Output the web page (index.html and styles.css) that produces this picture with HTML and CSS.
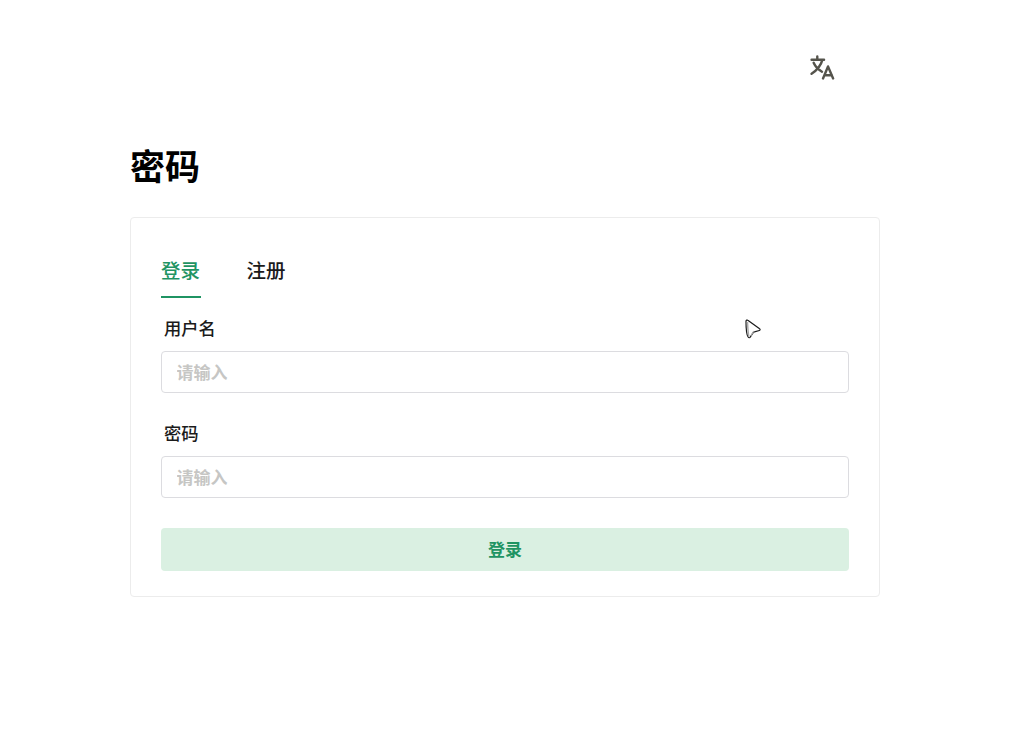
FILE: index.html
```html
<!DOCTYPE html>
<html lang="zh-CN">
<head>
<meta charset="utf-8">
<title>密码</title>
<link rel="stylesheet" href="styles.css">
</head>
<body>
<main class="page">
  <div class="topbar">
    <button class="lang" type="button" aria-label="语言">
      <svg width="25" height="25" viewBox="0 0 24 24" fill="none" stroke="#55544c" stroke-width="2.300" stroke-linecap="round" stroke-linejoin="round">
        <path d="M1.500 4.500h12M7 1.500v3M12 4.500C10.500 10 7 14.500 1.500 18M3.500 7.500c1.500 3.500 4.500 6.500 8 8.500"/>
        <path d="M12.500 22.500l4.800-11.500 4.900 11.500M14 19.500h7"/>
      </svg>
    </button>
  </div>
  <h1 class="title">密码</h1>
  <section class="card">
    <div class="tabs">
      <div class="tab tab-active">登录</div>
      <div class="tab">注册</div>
    </div>
    <form class="form">
      <div class="field">
        <label class="label" for="user">用户名</label>
        <input class="input" id="user" type="text" placeholder="请输入">
      </div>
      <div class="field">
        <label class="label" for="pass">密码</label>
        <input class="input" id="pass" type="text" placeholder="请输入">
      </div>
      <button class="submit" type="button">登录</button>
    </form>
  </section>
</main>
<svg class="cursor" width="18" height="20" viewBox="0 0 18 20" fill="#fff" stroke="#1a1a1a" stroke-width="1.200" stroke-linejoin="round">
  <path d="M2 2.200c0-1 1-1.500 1.800-.9l11.800 8.400c.8.500.6 1.600-.2 1.800l-5 1.400c-.5.1-.9.400-1.200.8l-3 4.500c-.5.8-1.800.7-2.100-.3C2.200 15 2 8 2 2.200z"/>
  <path d="M3.500 3c.2 5 .5 10 1.300 14.500" fill="none" stroke="#aaa" stroke-width="1.500"/>
  <path d="M6.800 17l3-5" fill="none" stroke="#aaa"/>
</svg>
</body>
</html>
```
FILE: styles.css
```css
* { box-sizing: border-box; }
html, body { margin: 0; height: 100%; background: #fff; }
body {
  font-family: "Noto Sans CJK SC", "Liberation Sans", sans-serif;
  color: #1b1b1b;
  position: relative;
  overflow: hidden;
}
.page { width: 750px; margin-left: 130px; }
.topbar {
  height: 143px;
  display: flex;
  justify-content: flex-end;
  padding: 55px 45px 0 0;
}
.lang {
  width: 25px;
  height: 25px;
  padding: 0;
  border: 0;
  background: none;
}
.lang svg { display: block; }
.title {
  margin: 0 0 31px;
  height: 43px;
  font-size: 35px;
  line-height: 43px;
  font-weight: 700;
  color: #000;
}
.card {
  height: 380px;
  border: 1px solid #ececec;
  border-radius: 4px;
  padding: 30px;
}
.tabs { display: flex; gap: 45.500px; height: 50px; }
.tab {
  height: 50px;
  width: 40px;
  font-size: 19.500px;
  font-weight: 500;
  line-height: 44px;
  white-space: nowrap;
}
.tab-active { color: #1f9463; border-bottom: 2px solid #1f9463; }
.form { display: flex; flex-direction: column; padding-top: 18px; }
.field { display: flex; flex-direction: column; height: 105px; }
.label {
  height: 35px;
  padding-left: 3px;
  font-size: 17.300px;
  line-height: 23px;
  font-weight: 500;
}
.input {
  height: 42px;
  width: 100%;
  border: 1px solid #dcdce0;
  border-radius: 4px;
  padding: 0 15px 2px 14.500px;
  font: 700 17px "Noto Sans CJK SC", sans-serif;
  background: #fff;
  outline: none;
}
.input::placeholder { color: #c6c6c4; opacity: 1; }
.submit {
  margin-top: 2px;
  height: 43px;
  border: 0;
  border-radius: 4px;
  background: #daf0e2;
  color: #1f9463;
  padding: 0 0 3px;
  font: 700 17px "Noto Sans CJK SC", sans-serif;
}
.cursor { position: absolute; left: 744px; top: 319px; }
```
